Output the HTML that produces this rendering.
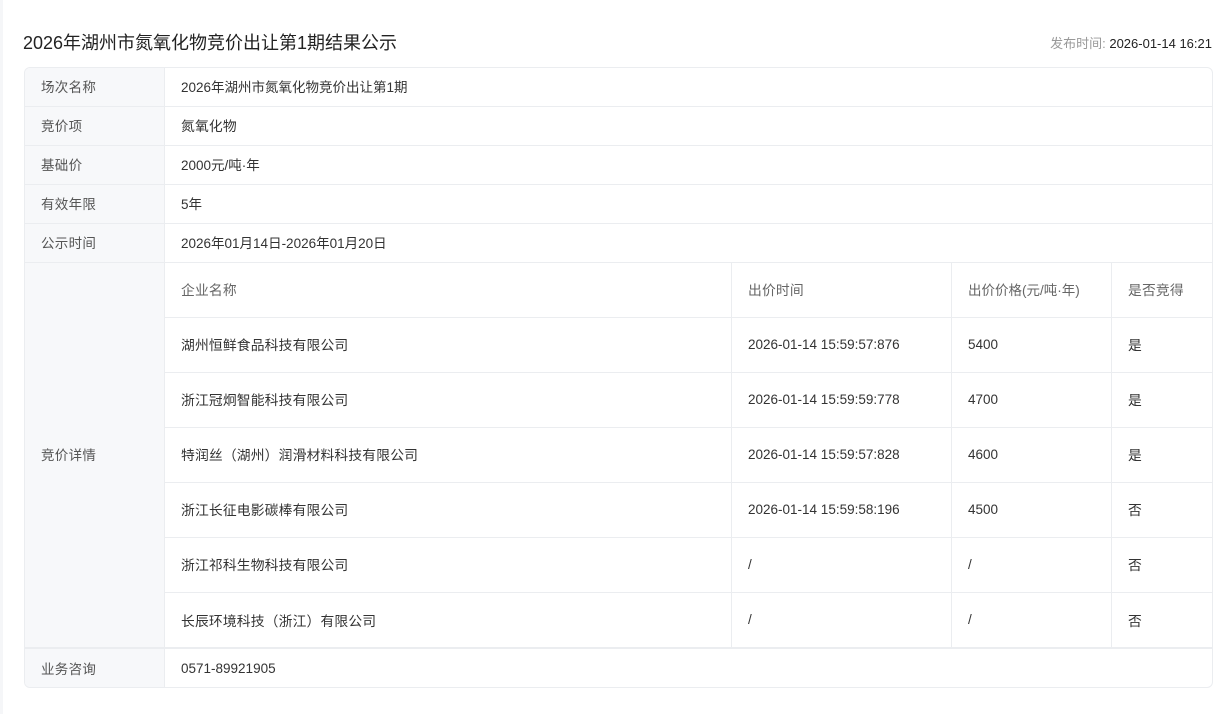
<!DOCTYPE html>
<html><head><meta charset="utf-8"><style>
*{margin:0;padding:0;box-sizing:border-box}
body{width:1230px;height:714px;background:#fff;font-family:"Liberation Sans","Noto Sans CJK SC",sans-serif;position:relative;overflow:hidden;color:#333}
.strip{position:absolute;left:0;top:0;width:3px;height:714px;background:#f5f6f8}
.title{position:absolute;left:23px;top:32px;font-size:18px;color:#222;line-height:22px}
.pub{position:absolute;right:18px;top:36px;font-size:13px;color:#222;line-height:16px}
.pub span{color:#999}
.box{position:absolute;left:24px;top:67px;width:1189px;height:621px;border:1px solid #ebedf0;border-radius:6px;overflow:hidden}
.r{position:absolute;left:0;width:1189px;border-bottom:1px solid #ebedf0;font-size:13.5px}
.l{position:absolute;left:0;top:0;bottom:0;width:140px;background:#f7f8fa;border-right:1px solid #ebedf0;color:#555;padding-left:16px;display:flex;align-items:center;padding-bottom:2px;font-size:13.5px;letter-spacing:0.3px}
.v{position:absolute;left:156px;top:0;bottom:0;display:flex;align-items:center;padding-bottom:2px}
.c{position:absolute;display:flex;align-items:center;padding-left:16px;font-size:13.5px;border-right:1px solid #ebedf0;border-bottom:1px solid #ebedf0;padding-bottom:2px}
.z{font-size:13.8px;letter-spacing:0.15px}
.h{color:#666}
</style></head><body>
<div class="strip"></div>
<div class="title">2026年湖州市氮氧化物竞价出让第1期结果公示</div>
<div class="pub"><span>发布时间:</span> 2026-01-14 16:21</div>
<div class="box">
<div class="r" style="top:0;height:39px"><div class="l">场次名称</div><div class="v">2026年湖州市氮氧化物竞价出让第1期</div></div>
<div class="r" style="top:39px;height:39px"><div class="l">竞价项</div><div class="v z">氮氧化物</div></div>
<div class="r" style="top:78px;height:39px"><div class="l">基础价</div><div class="v">2000元/吨·年</div></div>
<div class="r" style="top:117px;height:39px"><div class="l">有效年限</div><div class="v">5年</div></div>
<div class="r" style="top:156px;height:39px"><div class="l">公示时间</div><div class="v">2026年01月14日-2026年01月20日</div></div>
<div class="r" style="top:195px;height:386px;border-bottom:2px solid #ebedf0"><div class="l">竞价详情</div>
<div style="position:absolute;left:140px;top:0;width:1049px;height:384px">
<div class="c h z" style="left:0;top:0;width:567px;height:55px">企业名称</div>
<div class="c h z" style="left:567px;top:0;width:220px;height:55px">出价时间</div>
<div class="c h" style="left:787px;top:0;width:160px;height:55px">出价价格(元/吨·年)</div>
<div class="c h z" style="left:947px;top:0;width:102px;height:55px">是否竞得</div>

<div class="c z" style="left:0;top:55px;width:567px;height:55px">湖州恒鲜食品科技有限公司</div>
<div class="c" style="left:567px;top:55px;width:220px;height:55px">2026-01-14 15:59:57:876</div>
<div class="c" style="left:787px;top:55px;width:160px;height:55px">5400</div>
<div class="c z" style="left:947px;top:55px;width:102px;height:55px">是</div>

<div class="c z" style="left:0;top:110px;width:567px;height:55px">浙江冠炯智能科技有限公司</div>
<div class="c" style="left:567px;top:110px;width:220px;height:55px">2026-01-14 15:59:59:778</div>
<div class="c" style="left:787px;top:110px;width:160px;height:55px">4700</div>
<div class="c z" style="left:947px;top:110px;width:102px;height:55px">是</div>

<div class="c z" style="left:0;top:165px;width:567px;height:55px">特润丝（湖州）润滑材料科技有限公司</div>
<div class="c" style="left:567px;top:165px;width:220px;height:55px">2026-01-14 15:59:57:828</div>
<div class="c" style="left:787px;top:165px;width:160px;height:55px">4600</div>
<div class="c z" style="left:947px;top:165px;width:102px;height:55px">是</div>

<div class="c z" style="left:0;top:220px;width:567px;height:55px">浙江长征电影碳棒有限公司</div>
<div class="c" style="left:567px;top:220px;width:220px;height:55px">2026-01-14 15:59:58:196</div>
<div class="c" style="left:787px;top:220px;width:160px;height:55px">4500</div>
<div class="c z" style="left:947px;top:220px;width:102px;height:55px">否</div>

<div class="c z" style="left:0;top:275px;width:567px;height:55px">浙江祁科生物科技有限公司</div>
<div class="c" style="left:567px;top:275px;width:220px;height:55px">/</div>
<div class="c" style="left:787px;top:275px;width:160px;height:55px">/</div>
<div class="c z" style="left:947px;top:275px;width:102px;height:55px">否</div>

<div class="c z" style="left:0;top:330px;width:567px;height:55px;border-bottom:none">长辰环境科技（浙江）有限公司</div>
<div class="c" style="left:567px;top:330px;width:220px;height:55px;border-bottom:none">/</div>
<div class="c" style="left:787px;top:330px;width:160px;height:55px;border-bottom:none">/</div>
<div class="c z" style="left:947px;top:330px;width:102px;height:55px;border-bottom:none">否</div>
</div></div>
<div class="r" style="top:581px;height:40px;border-bottom:none"><div class="l">业务咨询</div><div class="v">0571-89921905</div></div>
</div>
</body></html>
